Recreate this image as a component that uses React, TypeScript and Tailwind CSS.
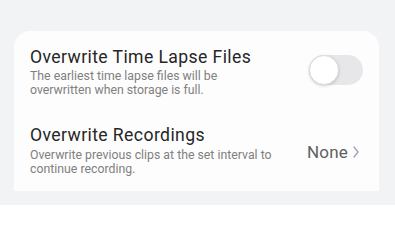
import React from 'react';

const Toggle: React.FC = () => (
  <div className="relative h-[30px] w-[54px] shrink-0 rounded-full bg-[#e7e7e9]">
    <div className="absolute left-0 top-0 h-[30px] w-[30px] rounded-full border border-[#dcdcdc] bg-white shadow-[0_1px_3px_rgba(0,0,0,0.18)]" />
  </div>
);

export default function App() {
  return (
    <div className="min-h-[205px] bg-[#f2f3f5] pl-[14px] pr-[16px] pt-[31px] font-['Roboto',sans-serif]">
      <div className="flex flex-col gap-[27px] rounded-t-[16px] bg-[#fdfdfd] py-[15px] pl-[16px] pr-[16px]">
        {/* Time lapse row */}
        <div className="flex items-center justify-between">
          <div>
            <div className="text-[17.6px] leading-[22px] tracking-[0.4px] text-[#262626]">Overwrite Time Lapse Files</div>
            <div className="mt-[1px] text-[12.3px] leading-[14px] text-[#808080]">
              The earliest time lapse files will be
              <br />
              overwritten when storage is full.
            </div>
          </div>
          <div className="-mt-[3px]">
            <Toggle />
          </div>
        </div>

        {/* Recordings row */}
        <div className="flex items-center justify-between">
          <div>
            <div className="text-[17.6px] leading-[22px] tracking-[0.4px] text-[#262626]">Overwrite Recordings</div>
            <div className="mt-[2px] text-[12.3px] leading-[14px] text-[#808080]">
              Overwrite previous clips at the set interval to
              <br />
              continue recording.
            </div>
          </div>
          <div className="mr-[4px] mt-[3px] flex items-center gap-[5px]">
            <span className="text-[17px] leading-[20px] tracking-[0.2px] text-[#606060]">None</span>
            <svg width="6" height="12" viewBox="0 0 6 12" fill="none">
              <path d="M1 1l4 5-4 5" stroke="#a09eb0" strokeWidth="1.3" strokeLinecap="round" strokeLinejoin="round" />
            </svg>
          </div>
        </div>
      </div>
    </div>
  );
}
